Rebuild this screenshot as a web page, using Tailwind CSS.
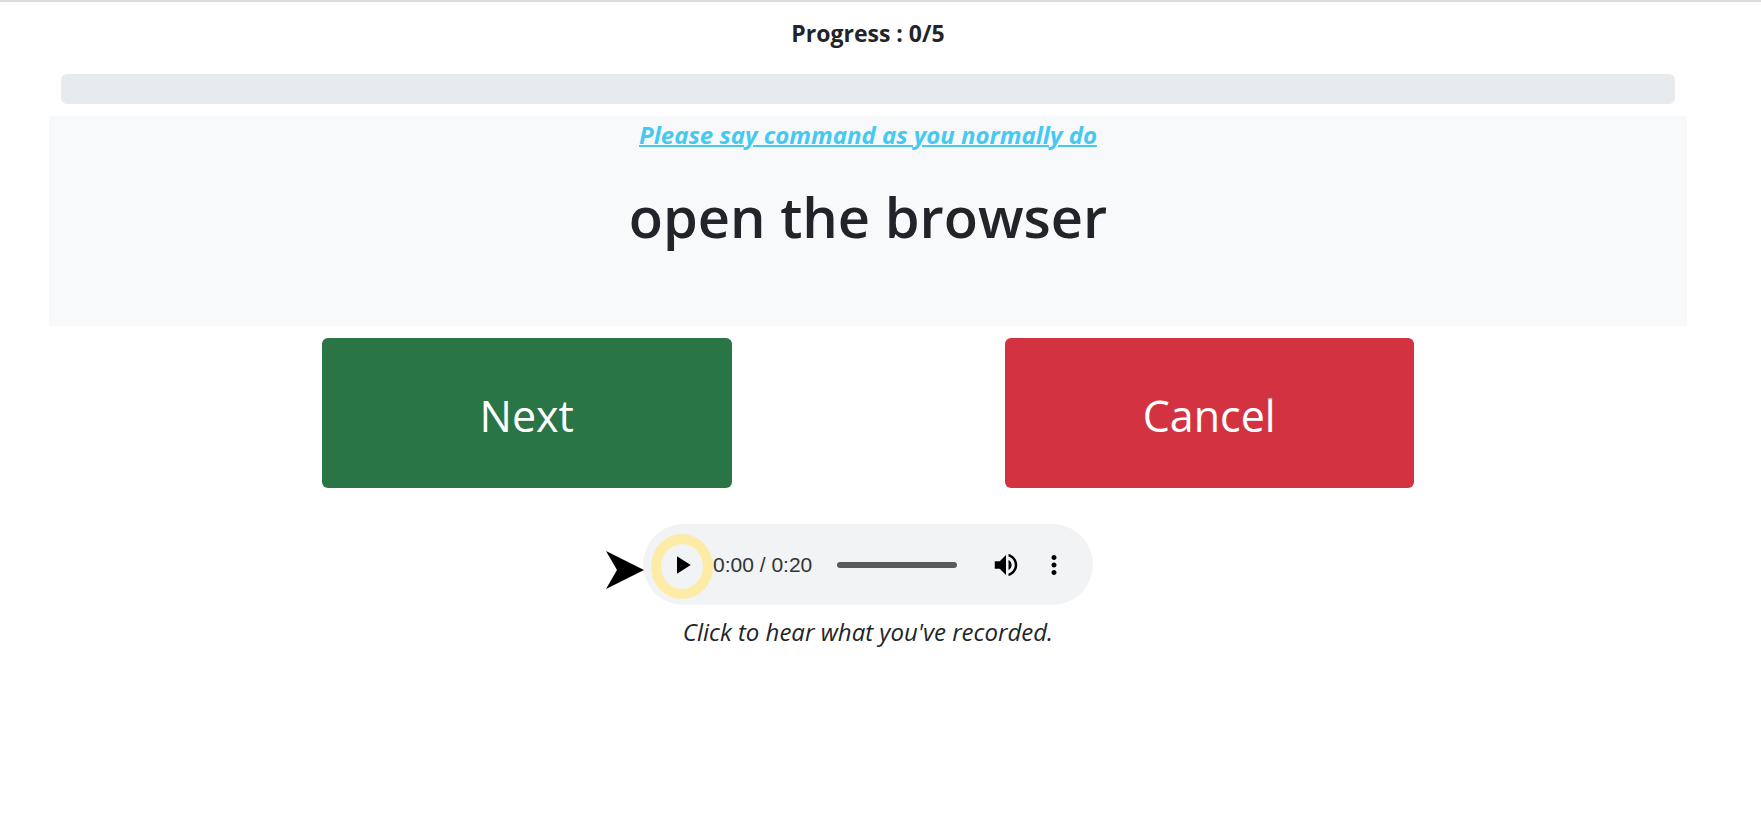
<!DOCTYPE html>
<html lang="en">
<head>
<meta charset="utf-8">
<title>Voice recorder</title>
<script src="https://cdn.jsdelivr.net/npm/@tailwindcss/browser@4"></script>
</head>
<body class="min-h-screen border-t-2 border-[#dcdce0] bg-white pr-[74px] pl-[49px] font-['Open_Sans','Noto_Sans',sans-serif] text-[#212529]">
<main class="flex flex-col text-center">
  <section class="p-3">
    <h1 id="progress-label" class="mb-[22px] text-[23px] leading-[38px] font-bold">Progress : 0/5</h1>
    <div role="progressbar" aria-labelledby="progress-label" aria-valuemin="0" aria-valuemax="5" aria-valuenow="0" class="h-[30px] rounded-md bg-[#e8ebee]"></div>
  </section>
  <section class="h-[210px] bg-[#f8f9fb]">
    <p class="text-[24px] leading-[38px] font-bold text-[#46c9f1] italic underline decoration-2">Please say command as you normally do</p>
    <h2 class="mt-[22px] text-[56px] leading-[80px] font-semibold">open the browser</h2>
  </section>
  <div class="mt-3 flex justify-evenly">
    <button type="button" class="h-[150px] w-1/4 rounded-md bg-[#2a7546] pt-[6px] text-[43px] text-white">Next</button>
    <button type="button" class="h-[150px] w-1/4 rounded-md bg-[#d33241] pt-[6px] text-[43px] text-white">Cancel</button>
  </div>
  <div class="relative mt-9 flex h-[81px] w-[450px] items-center self-center rounded-full bg-[#f1f3f4] pr-6 pl-6 text-black">
    <svg class="absolute top-[27px] -left-[37px] h-[38px] w-[38px]" viewBox="0 0 38 38" fill="currentColor" aria-hidden="true"><path d="M0 0 38 19 0 38 11 19Z"/></svg>
    <span class="pointer-events-none absolute top-[10px] left-2 h-[65px] w-[62px] rounded-[50%] border-[10px] border-[#fdeba6]"></span>
    <button type="button" aria-label="Play" class="shrink-0">
      <svg class="h-[30px] w-[30px]" viewBox="0 0 24 24" fill="currentColor"><path d="M8 5v14l11-7z"/></svg>
    </button>
    <span class="ml-4 shrink-0 font-['Liberation_Sans',sans-serif] text-[21px] text-[#333]">0:00 / 0:20</span>
    <input type="range" aria-label="Position" min="0" max="20" value="0" class="mr-6 ml-[25px] h-[6px] min-w-0 flex-1 appearance-none rounded-full bg-[#5a5a5a] [&::-webkit-slider-thumb]:appearance-none [&::-webkit-slider-thumb]:opacity-0">
    <button type="button" aria-label="Mute" class="ml-[10px] shrink-0">
      <svg class="h-[30px] w-[30px]" viewBox="0 0 24 24" fill="currentColor"><path d="M3 9v6h4l5 5V4L7 9H3zm13.5 3c0-1.77-1.02-3.29-2.5-4.03v8.05c1.48-.73 2.5-2.25 2.5-4.02zM14 3.23v2.06c2.89.86 5 3.54 5 6.71s-2.11 5.85-5 6.71v2.06c4.01-.91 7-4.49 7-8.77s-2.99-7.86-7-8.77z"/></svg>
    </button>
    <button type="button" aria-label="More options" class="ml-[18px] shrink-0">
      <svg class="h-[30px] w-[30px]" viewBox="0 0 24 24" fill="currentColor"><path d="M12 8c1.1 0 2-.9 2-2s-.9-2-2-2-2 .9-2 2 .9 2 2 2zm0 2c-1.1 0-2 .9-2 2s.9 2 2 2 2-.9 2-2-.9-2-2-2zm0 6c-1.1 0-2 .9-2 2s.9 2 2 2 2-.9 2-2-.9-2-2-2z"/></svg>
    </button>
  </div>
  <p class="mt-2 text-[24px] leading-[38px] italic">Click to hear what you've recorded.</p>
</main>
</body>
</html>
